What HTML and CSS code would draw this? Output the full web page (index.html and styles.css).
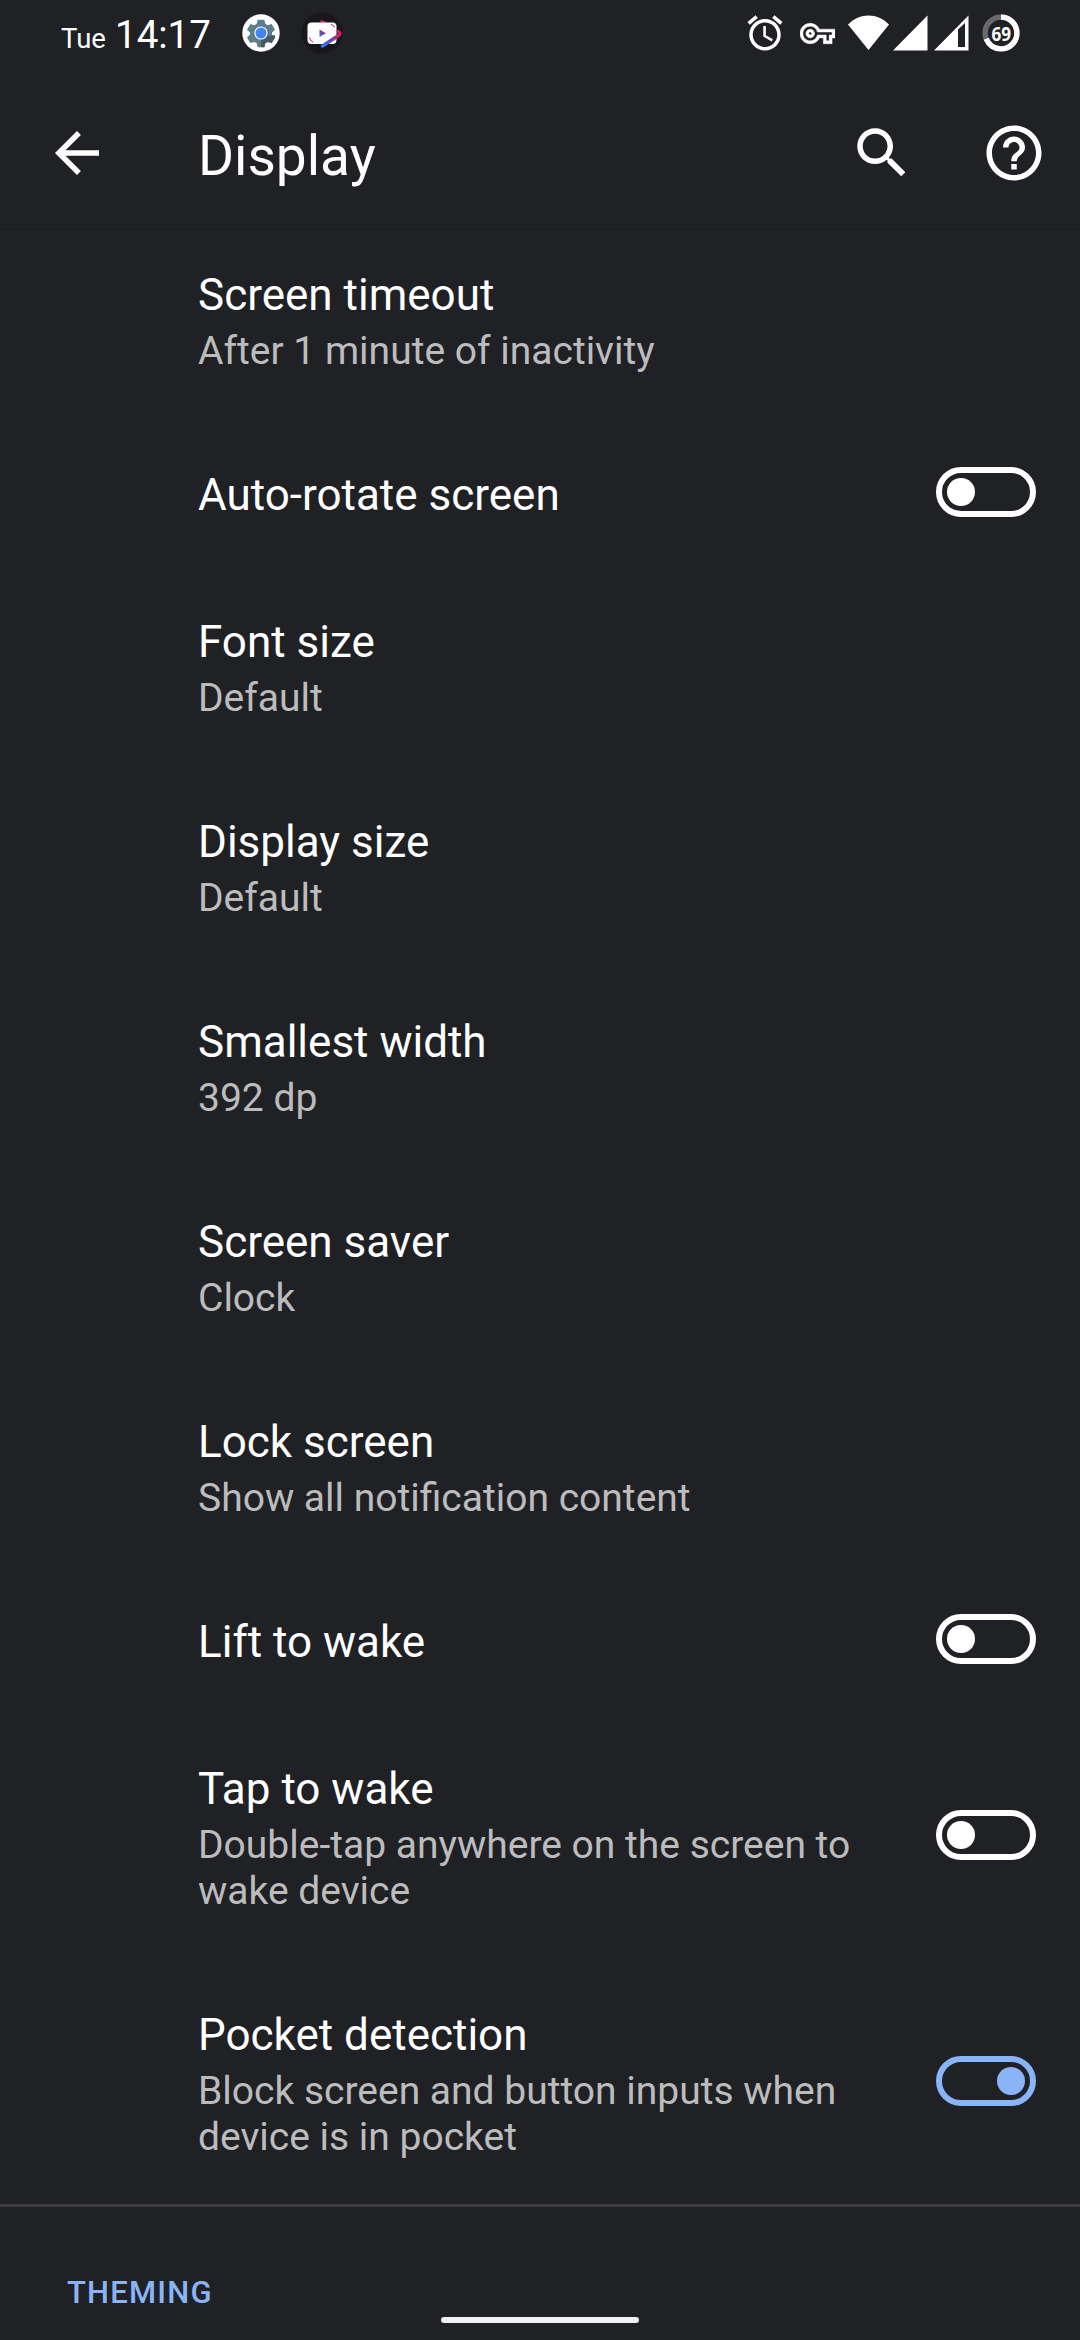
FILE: index.html
```html
<!DOCTYPE html>
<html lang="en">
<head>
<meta charset="utf-8">
<title>Display</title>
<link rel="stylesheet" href="styles.css">
</head>
<body>
<div class="screen">
  <header class="status-bar">
    <div class="status-left">
      <span class="day">Tue</span>
      <span class="clock">14:17</span>
      <svg class="settings-app" width="38" height="38" viewBox="0 0 38 38">
        <circle cx="19" cy="19" r="18.7" fill="#fff"/>
        <path d="M15.7 5.8h6.6l1 4 2.4 1.4 4-1.2 3.3 5.7-3 2.8v2.1l3 2.8-3.3 5.7-4-1.2-2.4 1.4-1 4h-6.6l-1-4-2.4-1.4-4 1.2L5 23.400l3-2.800v-2.100l-3-2.800L8.300 10l4 1.200 2.400-1.400z" fill="#607d8b"/>
        <path d="M19 19l9 3 5-1v2.400l-3.300 5.700-4-1.200-2.400 1.400-1 4H19z" fill="#455a64"/>
        <circle cx="19" cy="19" r="6.600" fill="#fff"/>
        <circle cx="19" cy="19" r="5.500" fill="#4285f4"/>
      </svg>
      <svg class="video-app" width="42" height="42" viewBox="0 0 42 42">
        <defs>
          <linearGradient id="ribbon" x1="0" y1="1" x2="1" y2="0">
            <stop offset="0" stop-color="#2f7df0"/>
            <stop offset=".45" stop-color="#6c43b8"/>
            <stop offset="1" stop-color="#ed1650"/>
          </linearGradient>
        </defs>
        <circle cx="21" cy="21" r="20.500" fill="#18171a"/>
        <path d="M20.500 9.500l4 1.800" stroke="#d81b60" stroke-width="2.600" stroke-linecap="round"/>
        <rect x="6.500" y="10.500" width="29" height="21.500" rx="4" fill="#fff"/>
        <path d="M8.500 25.500q.5 3.500 3.500 4.500M30 12.500q3 .5 3.500 3" fill="none" stroke="#c2185b" stroke-width="1"/>
        <path d="M21.500 34L37.500 23.500q2.300-2.200 0-4" fill="none" stroke="url(#ribbon)" stroke-width="3.400" stroke-linecap="round" stroke-linejoin="round"/>
        <path d="M18.500 17.500v7.500l6.500-3.700z" fill="url(#ribbon)"/>
      </svg>
    </div>
    <div class="status-right">
      <svg class="alarm" width="42" height="42" viewBox="0 0 24 24"><path fill="#fff" d="M22 5.720l-4.600-3.860-1.290 1.530 4.600 3.860L22 5.720zM7.880 3.390L6.600 1.860 2 5.710l1.290 1.530 4.590-3.850zM12.500 8H11v6l4.750 2.850.75-1.230-4-2.370V8zM12 4c-4.970 0-9 4.030-9 9s4.020 9 9 9c4.970 0 9-4.030 9-9s-4.030-9-9-9zm0 16c-3.870 0-7-3.130-7-7s3.130-7 7-7 7 3.130 7 7-3.130 7-7 7z"/></svg>
      <svg class="key" width="35" height="35" viewBox="0 0 24 24"><path fill="#fff" stroke="#fff" stroke-width=".3" d="M22 19h-6v-4h-2.680c-1.140 2.420-3.600 4-6.320 4-3.860 0-7-3.140-7-7s3.140-7 7-7c2.720 0 5.170 1.580 6.320 4H24v6h-2v4zm-4-2h2v-4h2v-2H11.940l-.23-.67C11.010 8.340 9.110 7 7 7c-2.760 0-5 2.240-5 5s2.240 5 5 5c2.110 0 4.010-1.340 4.710-3.330l.23-.67H18v4zM7 15c-1.650 0-3-1.350-3-3s1.350-3 3-3 3 1.350 3 3-1.350 3-3 3zm0-4c-.55 0-1 .45-1 1s.45 1 1 1 1-.45 1-1-.45-1-1-1z"/></svg>
      <svg class="wifi" width="41" height="36" viewBox="0 0 41 36"><path fill="#fff" d="M20.500 35L0 9.500C6 3.500 13 .5 20.500.5S35 3.500 41 9.500z"/></svg>
      <svg class="signal" width="35" height="36" viewBox="0 0 35 36"><path fill="#fff" d="M0 35.500L34.500.5v35z"/></svg>
      <svg class="signal second" width="35" height="36" viewBox="0 0 35 36"><path fill="#fff" fill-rule="evenodd" d="M0 35.500L34.500.5v35zM24 14.500V32h7V8z"/></svg>
      <svg class="battery" width="38" height="38" viewBox="0 0 38 38">
        <circle cx="19" cy="19" r="15.900" fill="none" stroke="#69696c" stroke-width="5.400"/>
        <circle cx="19" cy="19" r="15.900" fill="none" stroke="#fff" stroke-width="5.400" pathLength="100" stroke-dasharray="69 31" transform="rotate(-90 19 19)"/>
        <text class="battery-level" x="9.500" y="27" textLength="19.500" lengthAdjust="spacingAndGlyphs">69</text>
      </svg>
    </div>
  </header>

  <nav class="app-bar">
    <svg class="icon" viewBox="0 0 24 24"><path d="M20 11H7.830l5.590-5.590L12 4l-8 8 8 8 1.410-1.410L7.830 13H20v-2z"/></svg>
    <h1 class="page-title">Display</h1>
    <svg class="icon" viewBox="0 0 24 24"><path d="M15.500 14h-.79l-.28-.27C15.410 12.590 16 11.110 16 9.500 16 5.910 13.090 3 9.500 3S3 5.910 3 9.500 5.910 16 9.500 16c1.610 0 3.090-.59 4.230-1.570l.27.28v.79l5 4.990L20.490 19l-4.990-5zm-6 0C7.010 14 5 11.990 5 9.500S7.010 5 9.500 5 14 7.010 14 9.500 11.990 14 9.500 14z"/></svg>
    <svg class="icon help" viewBox="0 0 24 24"><path d="M11 18h2v-2h-2v2zm1-16C6.480 2 2 6.480 2 12s4.480 10 10 10 10-4.480 10-10S17.520 2 12 2zm0 18c-4.410 0-8-3.590-8-8s3.590-8 8-8 8 3.590 8 8-3.590 8-8 8zm0-14c-2.210 0-4 1.790-4 4h2c0-1.100.9-2 2-2s2 .9 2 2c0 2-3 1.750-3 5h2c0-2.250 3-2.500 3-5 0-2.210-1.790-4-4-4z"/></svg>
  </nav>

  <main class="list">
    <section class="row first"><div class="text"><h2>Screen timeout</h2><p>After 1 minute of inactivity</p></div></section>
    <section class="row"><div class="text"><h2>Auto-rotate screen</h2></div><span class="toggle"></span></section>
    <section class="row"><div class="text"><h2>Font size</h2><p>Default</p></div></section>
    <section class="row"><div class="text"><h2>Display size</h2><p>Default</p></div></section>
    <section class="row"><div class="text"><h2>Smallest width</h2><p>392 dp</p></div></section>
    <section class="row"><div class="text"><h2>Screen saver</h2><p>Clock</p></div></section>
    <section class="row"><div class="text"><h2>Lock screen</h2><p>Show all notification content</p></div></section>
    <section class="row"><div class="text"><h2>Lift to wake</h2></div><span class="toggle"></span></section>
    <section class="row"><div class="text"><h2>Tap to wake</h2><p>Double-tap anywhere on the screen to<br>wake device</p></div><span class="toggle"></span></section>
    <section class="row"><div class="text"><h2>Pocket detection</h2><p>Block screen and button inputs when<br>device is in pocket</p></div><span class="toggle on"></span></section>
  </main>

  <section class="category"><h3>THEMING</h3></section>
  <div class="home-handle"></div>
</div>
</body>
</html>
```

FILE: styles.css
```css
* { box-sizing: border-box; margin: 0; }

body {
  background: #202125;
  color: #fff;
  font-family: Roboto, sans-serif;
}

svg { display: block; flex: none; }

.screen {
  position: relative;
  display: flex;
  flex-direction: column;
  width: 1080px;
  height: 2340px;
  overflow: hidden;
}

.status-bar {
  display: flex;
  justify-content: space-between;
  height: 76px;
  padding: 0 60px 0 61px;
}

.status-left, .status-right { display: flex; }
.status-left { align-items: baseline; height: 76px; }
.day { font-size: 27.500px; line-height: 32px; width: 54px; }
.clock { font-size: 38.500px; line-height: 70px; width: 127px; }
.settings-app, .video-app { align-self: flex-start; }
.settings-app { margin-top: 14px; }
.video-app { margin: 11.500px 0 0 21px; }

.alarm { margin-top: 12px; }
.key { margin: 15.500px 0 0 14px; }
.wifi { margin: 14.500px 0 0 13px; }
.signal { margin: 14.500px 0 0 4px; }
.second { margin-left: 6px; }
.battery { margin: 13.500px 0 0 13px; }
.battery-level { font: 700 20px "Open Sans", sans-serif; fill: #fff; }

.app-bar {
  display: flex;
  align-items: center;
  height: 154px;
  padding: 0 33px 0 44px;
  border-bottom: 1px solid #1c1d21;
}

.icon { width: 66px; height: 66px; fill: #fff; }
.help { margin-left: 66px; }

.page-title {
  flex: 1;
  padding: 7px 0 0 88px;
  font-size: 55px;
  font-weight: 400;
  line-height: 64px;
}

.list { border-bottom: 3px solid #3b3b40; }

.row {
  display: flex;
  align-items: center;
  justify-content: space-between;
  padding: 0 44px 0 198px;
}

.text { padding: 51px 0 44px; }
.first .text { padding-top: 39px; }

.row h2 {
  font-size: 44px;
  font-weight: 400;
  line-height: 52px;
}

.row p {
  margin-top: 7px;
  color: #bcbcbd;
  font-size: 39px;
  line-height: 46px;
}

.toggle {
  display: flex;
  width: 100px;
  height: 50px;
  padding: 5px;
  border: 6px solid currentColor;
  border-radius: 25px;
}

.toggle::before {
  content: "";
  width: 28px;
  height: 28px;
  border-radius: 50%;
  background: currentColor;
}

.on { color: #8ab4f8; justify-content: flex-end; }

.category { padding: 68px 67px 0; }

.category h3 {
  color: #8ab4f8;
  font-size: 31px;
  font-weight: 500;
  line-height: 36px;
  letter-spacing: 1.200px;
}

.home-handle {
  position: absolute;
  left: 441px;
  top: 2317px;
  width: 198px;
  height: 6px;
  border-radius: 3px;
  background: #f1f1f1;
}
```
